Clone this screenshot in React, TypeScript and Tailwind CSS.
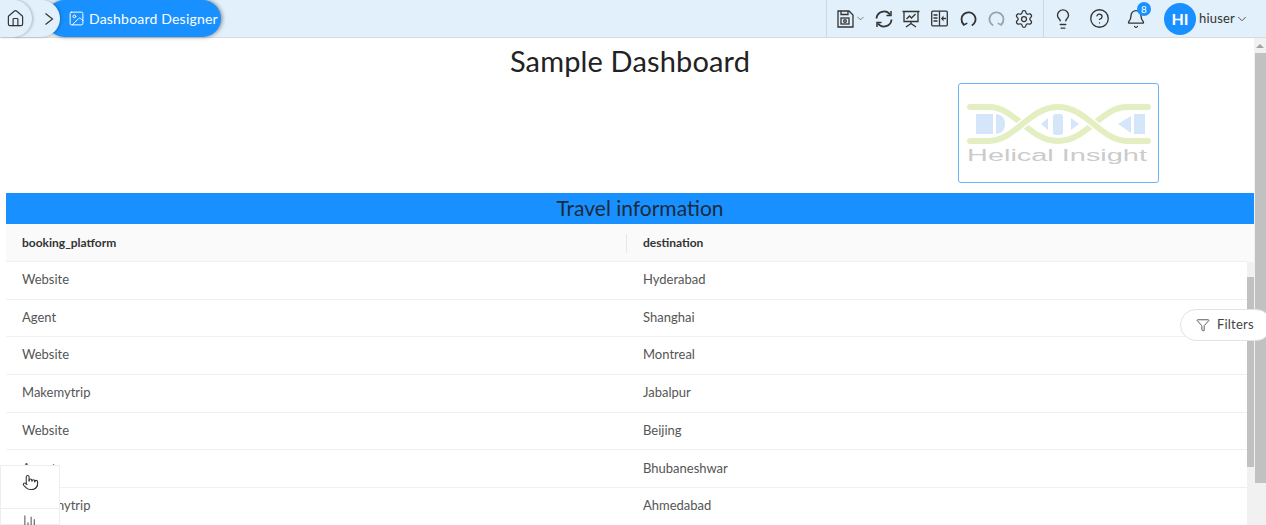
import React from "react";
import { House, Image, Settings, Lightbulb, CircleHelp, Bell, ChevronDown, Pointer, ChartColumn, Funnel } from "lucide-react";

const rows = [
  ["Website", "Hyderabad"],
  ["Agent", "Shanghai"],
  ["Website", "Montreal"],
  ["Makemytrip", "Jabalpur"],
  ["Website", "Beijing"],
  ["Agent", "Bhubaneshwar"],
  ["Makemytrip", "Ahmedabad"],
];

function SaveIcon() {
  return (
    <svg width="17" height="18" viewBox="0 0 17 18" fill="none" stroke="#333" strokeWidth="1.300">
      <path d="M1 1h11l4 4v12H1z" />
      <path d="M4 1v3.500h7V1" />
      <rect x="4" y="8" width="8" height="6" />
      <circle cx="8" cy="11" r="1.300" />
    </svg>
  );
}

function SyncIcon() {
  return (
    <svg width="18" height="18" viewBox="0 0 18 18" fill="none" stroke="#333" strokeWidth="1.800">
      <path d="M1.500 8.500A7.500 7.500 0 0 1 15 4.500" />
      <path d="M16.500 9.500A7.500 7.500 0 0 1 3 13.500" />
      <path d="M16 1v4.500h-4.500" strokeWidth="1.500" />
      <path d="M2 17v-4.500h4.500" strokeWidth="1.500" />
    </svg>
  );
}

function BoardIcon() {
  return (
    <svg width="18" height="18" viewBox="0 0 18 18" fill="none" stroke="#333" strokeWidth="1.300">
      <path d="M0.500 1.500h17M2 1.500v10h14v-10" />
      <path d="M4.500 9l3-3 2 2 4-4" />
      <path d="M9 11.500v2M4 17l5-3.500 5 3.500" />
    </svg>
  );
}

function PanelIcon() {
  return (
    <svg width="17" height="17" viewBox="0 0 17 17" fill="none" stroke="#333" strokeWidth="1.300">
      <rect x="0.700" y="1.200" width="15.600" height="14.600" rx="1" />
      <path d="M8.500 1.200v14.600M2.500 5h4M2.500 8h4M2.500 11h4" />
      <path d="M15 8.500h-3" />
      <path d="M12.500 5.500v6l-2.500-3z" fill="#333" stroke="none" />
    </svg>
  );
}

function ArcIcon({ color }: { color: string }) {
  return (
    <svg width="17" height="18" viewBox="0 0 17 18" fill="none" stroke={color} strokeWidth="1.800">
      <path d="M11.800 15.500A7 7 0 1 0 3.800 14.500" />
      <path d="M1.500 11.500l2.300 3.500 3.500-1.800" strokeWidth="1.500" />
    </svg>
  );
}

function GreyArcIcon() {
  return (
    <svg width="17" height="18" viewBox="0 0 17 18" fill="none" stroke="#9aa3a8" strokeWidth="1.800">
      <path d="M5.200 15.500A7 7 0 1 1 13.200 14.500" />
      <path d="M15.500 11.500l-2.300 3.500-3.500-1.800" strokeWidth="1.500" />
    </svg>
  );
}

function Logo() {
  return (
    <svg width="184" height="64" viewBox="0 0 184 64" fill="none">
      <rect x="9" y="13" width="17" height="20" fill="#d5e5fa" />
      <path d="M29 13c7 1 9 5 9 10s-2 9-9 10z" fill="#d5e5fa" />
      <path d="M74 23l7-6v12z" fill="#d5e5fa" />
      <rect x="86" y="13" width="10" height="21" rx="3" fill="#d5e5fa" />
      <path d="M104 17l8 6-8 6z" fill="#d5e5fa" />
      <path d="M151 23l13-8v17z" fill="#d5e5fa" />
      <rect x="167" y="13" width="11" height="20" fill="#d5e5fa" />
      <path d="M3 6H22C48 6 62 40 91 40C120 40 134 6 160 6H181" stroke="#e3efc1" strokeWidth="6" strokeLinecap="round" />
      <path d="M3 40H22C48 40 62 6 91 6C120 6 134 40 160 40H181" stroke="#ffffff" strokeWidth="9" />
      <path d="M3 40H22C48 40 62 6 91 6C120 6 134 40 160 40H181" stroke="#e3efc1" strokeWidth="6" strokeLinecap="round" />
      <text x="0" y="60" textLength="180" lengthAdjust="spacingAndGlyphs" fontFamily="'Liberation Sans', sans-serif" fontSize="16" fill="#cbcbcb">Helical Insight</text>
    </svg>
  );
}

export default function App() {
  return (
    <div className="h-[525px] w-[1266px] overflow-hidden flex flex-col bg-white text-[#333] font-['Lato',sans-serif]">
      <header className="h-[38px] shrink-0 flex items-stretch bg-[#e1f0fa] border-b border-[#d9d9d9]">
        <nav className="relative flex items-center w-[222px] h-[37px]">
          <div className="absolute left-[46px] top-0 h-[37px] w-[175px] rounded-[20px] bg-[#1890ff] shadow-[1px_0_4px_rgba(0,0,0,0.45)] flex items-center pl-[22px] gap-[4px] text-white text-[14px] whitespace-nowrap">
            <Image size={17} strokeWidth={1.400} />
            <span className="tracking-[0.2px]">Dashboard Designer</span>
          </div>
          <div className="absolute left-[14px] top-0 h-[37px] w-[46px] rounded-r-[20px] bg-[#e1f0fa] shadow-[1px_0_3px_rgba(0,0,0,0.25)] flex items-center justify-end pr-[6px]">
            <svg width="10" height="14" viewBox="0 0 10 14" fill="none" stroke="#333" strokeWidth="1.200"><path d="M1.500 1.500L8.500 7l-7 5.500" /></svg>
          </div>
          <div className="absolute left-0 top-0 h-[37px] w-[32px] rounded-r-[20px] bg-[#e1f0fa] shadow-[1px_0_3px_rgba(0,0,0,0.25)] flex items-center pl-[6px]">
            <House size={19} strokeWidth={1.500} />
          </div>
        </nav>
        <div className="flex-1" />
        <div className="flex items-center pl-[10px] h-full border-l border-[#cfd8dc] w-[217px]">
          <SaveIcon />
          <ChevronDown size={11} className="ml-[1px] mr-[9px]" strokeWidth={1.300} />
          <SyncIcon />
          <span className="ml-[9px]"><BoardIcon /></span>
          <span className="ml-[11px]"><PanelIcon /></span>
          <span className="ml-[12px]"><ArcIcon color="#333" /></span>
          <span className="ml-[11px]"><GreyArcIcon /></span>
          <Settings size={20} strokeWidth={1.500} className="ml-[9px]" />
        </div>
        <div className="flex items-center pl-[8px] h-full border-l border-[#cfd8dc] w-[223px]">
          <Lightbulb size={22} strokeWidth={1.500} />
          <CircleHelp size={21} strokeWidth={1.500} className="ml-[15px]" />
          <div className="relative ml-[16px]">
            <Bell size={20} strokeWidth={1.600} />
            <span className="absolute -top-[7px] left-[11px] w-[14px] h-[14px] rounded-full bg-[#1890ff] text-white text-[10px] leading-[14px] text-center">8</span>
          </div>
          <div className="ml-[18px] w-[32px] h-[32px] rounded-full bg-[#1890ff] text-white text-[16px] font-bold flex items-center justify-center">HI</div>
          <span className="ml-[3px] text-[13px] tracking-[0.2px]">hiuser</span>
          <ChevronDown size={14} strokeWidth={1.400} />
        </div>
      </header>

      <div className="flex-1 flex min-h-0">
        <main className="relative flex-1 min-w-0 pl-[6px]">
          <h1 className="h-[45px] text-center text-[29px] leading-[45px] tracking-[0.15px] text-[#222]">Sample Dashboard</h1>
          <div className="h-[110px] flex justify-end pr-[95px]">
            <div className="w-[201px] h-[100px] border border-[#69b4fb] rounded-[3px] bg-white flex items-center justify-center">
              <Logo />
            </div>
          </div>
          <div className="h-[31px] bg-[#1890ff] pl-[20px] text-center text-[21px] leading-[30px] text-[#1c2b3a]">Travel information</div>
          <div className="flex">
            <div className="flex-1 min-w-0 text-[13px]">
              <div className="flex items-center h-[38px] bg-[#fafafa] border-b border-[#f0f0f0] font-bold text-[12px] text-[#333]">
                <div className="w-[621px] pl-[16px] relative">booking_platform<span className="absolute right-0 top-0 h-[19px] w-px bg-[#e8e8e8]" /></div>
                <div className="pl-[16px]">destination</div>
              </div>
              {rows.map(([a, b]) => (
                <div key={b} className="flex items-center pb-[1px] h-[37.700px] border-b border-[#f0f0f0] text-[#555]">
                  <div className="w-[621px] pl-[16px]">{a}</div>
                  <div className="pl-[16px]">{b}</div>
                </div>
              ))}
            </div>
            <div className="w-[7px] shrink-0 flex flex-col">
              <div className="h-[38px] bg-[#fafafa]" />
              <div className="h-[15px] bg-[#f1f1f1]" />
              <div className="h-[190px] bg-[#c1c1c1]" />
              <div className="flex-1 bg-[#f1f1f1]" />
            </div>
          </div>

          <button className="absolute left-[1180px] top-[271px] w-[92px] h-[32px] flex items-center pl-[15px] gap-[7px] bg-white border border-[#e3e3e3] rounded-full text-[13px] tracking-[0.2px] text-[#444]">
            <Funnel size={14} strokeWidth={1.500} />
            Filters
          </button>

          <div className="absolute left-0 top-[427px] w-[60px] h-[60px] bg-white border border-[#eeeeee] flex flex-col">
            <div className="h-[43px] border-b border-[#eeeeee] flex justify-center shrink-0 pt-[8px]">
              <Pointer size={17} strokeWidth={1.500} />
            </div>
            <div className="flex justify-center pt-[5px]"><ChartColumn size={15} strokeWidth={1.400} /></div>
          </div>
        </main>
        <aside className="w-[12px] shrink-0 bg-[#f1f1f1] flex flex-col items-center">
          <div className="h-[15px] flex items-center justify-center w-full">
            <span className="border-x-[4px] border-x-transparent border-b-[4px] border-b-[#a3a3a3]" />
          </div>
          <div className="w-[11px] self-end h-[430px] bg-[#c1c1c1]" />
        </aside>
      </div>
    </div>
  );
}
